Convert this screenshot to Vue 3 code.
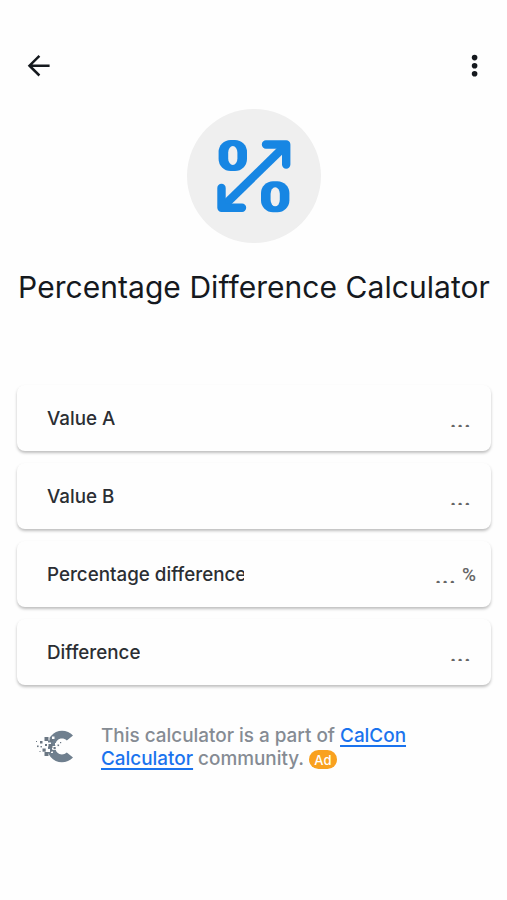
<template>
  <main class="screen">
    <header class="toolbar">
      <button class="icon-btn" aria-label="Back">
        <svg width="24" height="24" viewBox="0 0 24 24" fill="none" stroke="#15191e" stroke-width="2.5">
          <path d="M23.600 12.700H3.800M13.400 2.900L3.500 12.700L13.400 22.500" />
        </svg>
      </button>
      <button class="icon-btn" aria-label="Menu">
        <svg width="8" height="24" viewBox="0 0 8 24" fill="#15191e">
          <circle cx="3.6" cy="4.6" r="2.8" />
          <circle cx="3.6" cy="12.700" r="2.8" />
          <circle cx="3.6" cy="20.800" r="2.8" />
        </svg>
      </button>
    </header>

    <div class="hero">
      <svg width="134" height="134" viewBox="187 109 134 134" fill="none" stroke="#1786e3">
        <g stroke="none">
          <rect x="218.600" y="140" width="28.400" height="31" rx="12" fill="#1786e3" />
          <rect x="228.200" y="146" width="9.200" height="19" rx="4.600" ry="6.500" fill="#efefef" />
          <rect x="261" y="181.300" width="28.400" height="31" rx="12" fill="#1786e3" />
          <rect x="270.600" y="187.300" width="9.200" height="19" rx="4.600" ry="6.500" fill="#efefef" />
        </g>
        <path stroke-width="8.400" d="M223 206.500L285 146" />
        <path
          stroke-width="8.400"
          stroke-linecap="round"
          stroke-linejoin="round"
          d="M266 144.500H286.200V164.500M221.500 188V207.800H242"
        />
      </svg>
    </div>

    <h1 class="title">Percentage Difference Calculator</h1>

    <section class="fields">
      <div v-for="field in fields" :key="field.label" class="card">
        <span class="label">{{ field.label }}</span>
        <span class="value">
          <span class="dots">...</span>
          <span v-if="field.unit" class="unit">{{ field.unit }}</span>
        </span>
      </div>
    </section>

    <footer class="community">
      <svg class="logo" width="40" height="36" viewBox="0 0 40 36">
        <path
          d="M38 7.500L31.800 12.500C27.600 8.600 20.200 10.400 20.200 18.500S27.600 28.400 31.800 24.500L38 29.400C32.600 35.500 21.500 36.200 15.600 29L13 25V11.500L16 8C21.500 0.800 32.600 1.300 38 7.500Z"
          fill="#6f7f8e"
        />
        <rect
          v-for="(b, i) in holes"
          :key="'h' + i"
          :x="b[0]"
          :y="b[1]"
          :width="b[2]"
          :height="b[2]"
          fill="#fff"
        />
        <rect
          v-for="(b, i) in bits"
          :key="'b' + i"
          :x="b[0]"
          :y="b[1]"
          :width="b[2]"
          :height="b[2]"
          fill="#6a7682"
        />
      </svg>
      <p class="note">
        This calculator is a part of <a href="#">CalCon<br />Calculator</a> community.
        <span class="badge">Ad</span>
      </p>
    </footer>
  </main>
</template>

<script setup>
const fields = [
  { label: 'Value A' },
  { label: 'Value B' },
  { label: 'Percentage difference', unit: '%' },
  { label: 'Difference' },
]

// x, y, size of the squares the logo dissolves into
const holes = [
  [12, 10, 2.5], [17, 8.5, 2.5], [12, 14.5, 4], [17, 18, 4], [12, 21, 3], [16, 23, 2], [20, 15, 2],
]

const bits = [
  [1, 13, 1], [5, 13, 2.5], [9.5, 9, 4], [2, 17.5, 1.6], [5.5, 18, 1.4], [7.5, 20.5, 3.2],
  [10, 16, 2], [13.5, 16, 4], [9.5, 24, 4], [4.5, 23, 1], [15, 11, 2.8], [18.5, 19, 2.2],
  [22.5, 16.5, 1.6], [25, 14, 1.2], [15.5, 21.5, 2.2],
]
</script>

<style>
body {
  margin: 0;
  background: #fefefe;
}
</style>

<style scoped>
.screen {
  box-sizing: border-box;
  width: 507px;
  height: 900px;
  padding: 53px 16px 0 17px;
  overflow: hidden;
  font-family: Inter, 'Liberation Sans', sans-serif;
  color: #15191e;
}

.toolbar {
  display: flex;
  justify-content: space-between;
  height: 56px;
  padding: 0 12px 0 9px;
}

.icon-btn {
  display: flex;
  height: 24px;
  padding: 0;
  border: 0;
  background: none;
}

.hero {
  display: flex;
  width: 134px;
  height: 134px;
  margin: 0 auto;
  border-radius: 50%;
  background: #efefef;
}

.title {
  margin: 26px 0 0;
  font-size: 30px;
  line-height: 36px;
  font-weight: 430;
  letter-spacing: 0.05px;
  text-align: center;
  white-space: nowrap;
}

.fields {
  display: flex;
  flex-direction: column;
  gap: 12px;
  margin-top: 80px;
}

.card {
  display: flex;
  align-items: center;
  justify-content: space-between;
  box-sizing: border-box;
  height: 66px;
  padding: 2px 15px 0 30px;
  border-radius: 8px;
  background: #fefefe;
  box-shadow: 0 2px 3px rgba(0, 0, 0, 0.25);
}

.label {
  max-width: 197px;
  overflow: hidden;
  font-size: 18.8px;
  line-height: 28px;
  font-weight: 500;
  color: #2b2e33;
  white-space: nowrap;
}

.value {
  display: flex;
  align-items: center;
  color: #666;
}

/* the placeholder is cut by the bottom of its input box */
.dots {
  height: 17px;
  margin: -2px 5px 0 0;
  overflow: hidden;
  font-size: 25px;
  line-height: 19px;
}

.unit {
  margin-left: 1px;
  font-family: Roboto, sans-serif;
  font-size: 19px;
  line-height: 28px;
  font-weight: 500;
}

.community {
  display: flex;
  margin-top: 39px;
  padding-left: 18px;
}

.logo {
  flex: none;
  margin-top: 4px;
}

.note {
  margin: 0 0 0 26px;
  font-size: 18.9px;
  line-height: 23px;
  font-weight: 500;
  color: #858b93;
  white-space: nowrap;
}

.note a {
  color: #1a73ee;
  text-decoration: underline;
  text-decoration-thickness: 1.5px;
  text-underline-offset: 3px;
}

.badge {
  display: inline-block;
  width: 28px;
  height: 19px;
  border-radius: 10px;
  background: #f9a11f;
  font-size: 13px;
  line-height: 20px;
  text-align: center;
  color: #fff;
}
</style>
